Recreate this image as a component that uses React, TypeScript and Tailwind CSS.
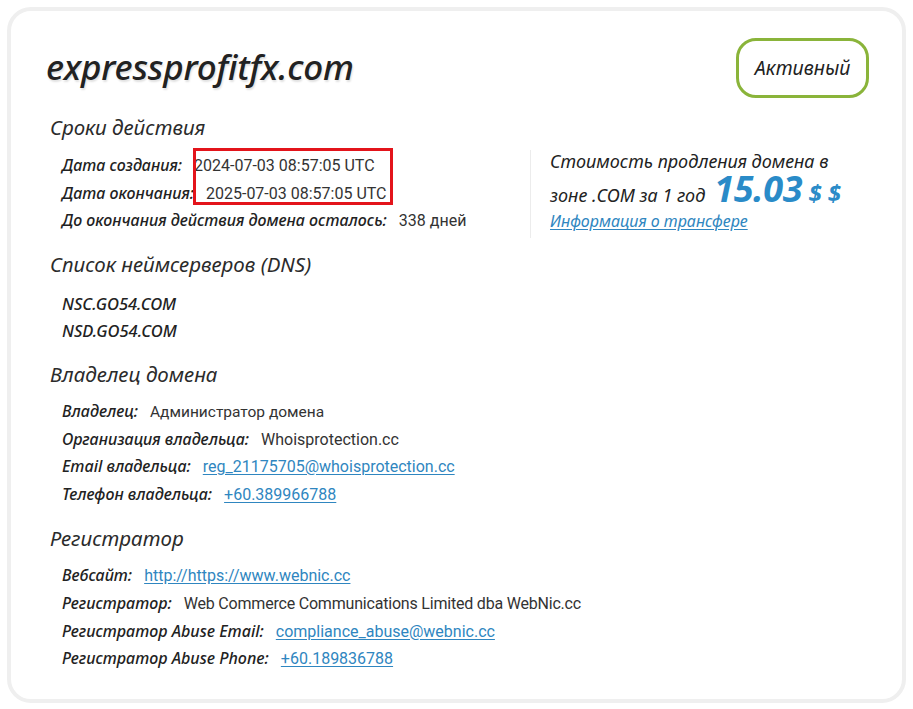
import React from 'react';

const font = { fontFamily: '"Noto Sans", "Open Sans", sans-serif' };

const Row: React.FC<{ label: string; valueClass?: string; children: React.ReactNode }> = ({ label, valueClass, children }) => (
  <div className="flex items-baseline h-[27.6px]">
    <span className="italic font-medium text-[16px] text-[#222]">{label}</span>
    <span className={`ml-[12px] text-[#333] ${valueClass ?? 'text-[16px]'}`} style={{ fontFamily: 'Roboto, sans-serif' }}>
      {children}
    </span>
  </div>
);

const Link: React.FC<{ children: React.ReactNode }> = ({ children }) => (
  <a href="#" className="text-[#2f86c0] underline underline-offset-2">
    {children}
  </a>
);

const Heading: React.FC<{ children: React.ReactNode }> = ({ children }) => (
  <h2 className="italic text-[20.5px] text-[#2b2b2b] leading-[28px]">{children}</h2>
);

const App: React.FC = () => {
  return (
    <div className="w-[913px] h-[709px] bg-white p-[7px]" style={font}>
      <div className="h-[696px] border-[4px] border-[#efefef] rounded-[24px] bg-white pl-[38px] pr-[33px] pt-[27px]">
        {/* Header */}
        <div className="flex justify-between items-start">
          <h1
            className="italic font-medium text-[35px] text-[#222] mt-[3px] ml-[-3px] tracking-[-0.2px]"
            style={{ textShadow: '1px 2px 2px rgba(0,0,0,0.12)' }}
          >
            expressprofitfx.com
          </h1>
          <div className="w-[133px] h-[60px] border-[3px] border-[#8ab43a] rounded-[20px] flex items-center justify-center">
            <span className="italic text-[19.5px] text-[#222]">Активный</span>
          </div>
        </div>

        {/* Сроки действия */}
        <div className="mt-[15px] ml-[1px]">
          <Heading>Сроки действия</Heading>
          <div className="flex mt-[9px]">
            <div className="relative w-[480px] pl-[12px] pt-[3px]">
              <Row label="Дата создания:">2024-07-03 08:57:05 UTC</Row>
              <Row label="Дата окончания:">2025-07-03 08:57:05 UTC</Row>
              <Row label="До окончания действия домена осталось:">338 дней</Row>
              <div className="absolute left-[143px] top-[-2px] w-[200px] h-[57px] border-[3px] border-[#e3141b]" />
            </div>
            <div className="border-l border-[#ececec] h-[88px] pl-[19px]">
              <p className="italic text-[18px] text-[#222] leading-[22px]">Стоимость продления домена в</p>
              <div className="italic text-[18px] text-[#222] h-[32px] mt-[1px] flex items-baseline">
                <span className="leading-[32px]">зоне .COM за 1 год</span>
                <span className="font-bold text-[36px] leading-[32px] text-[#2a8bc8] ml-[9px] tracking-[-0.3px]">15.03</span>
                <span className="font-bold text-[24px] leading-[32px] text-[#2a8bc8] ml-[6px]">$ $</span>
              </div>
              <a href="#" className="italic text-[16px] text-[#2f86c0] underline underline-offset-2 leading-[22px] mt-[5px] block">
                Информация о трансфере
              </a>
            </div>
          </div>
        </div>

        {/* DNS */}
        <div className="mt-[12px] ml-[1px]">
          <Heading>Список неймсерверов (DNS)</Heading>
          <div className="pl-[12px] mt-[12px]">
            <p className="italic font-medium text-[16.5px] text-[#222] h-[27px] leading-[27px]">NSC.GO54.COM</p>
            <p className="italic font-medium text-[16.5px] text-[#222] h-[27px] leading-[27px]">NSD.GO54.COM</p>
          </div>
        </div>

        {/* Владелец */}
        <div className="mt-[16px] ml-[1px]">
          <Heading>Владелец домена</Heading>
          <div className="pl-[12px] mt-[11px]">
            <Row label="Владелец:" valueClass="text-[15.5px]">Администратор домена</Row>
            <Row label="Организация владельца:">Whoisprotection.cc</Row>
            <Row label="Email владельца:">
              <Link>reg_21175705@whoisprotection.cc</Link>
            </Row>
            <Row label="Телефон владельца:">
              <Link>+60.389966788</Link>
            </Row>
          </div>
        </div>

        {/* Регистратор */}
        <div className="mt-[15px] ml-[1px]">
          <Heading>Регистратор</Heading>
          <div className="pl-[12px] mt-[11px]">
            <Row label="Вебсайт:">
              <Link>http://https://www.webnic.cc</Link>
            </Row>
            <Row label="Регистратор:" valueClass="text-[16px] tracking-[-0.2px]">
              Web Commerce Communications Limited dba WebNic.cc
            </Row>
            <Row label="Регистратор Abuse Email:">
              <Link>compliance_abuse@webnic.cc</Link>
            </Row>
            <Row label="Регистратор Abuse Phone:">
              <Link>+60.189836788</Link>
            </Row>
          </div>
        </div>
      </div>
    </div>
  );
};

export default App;
